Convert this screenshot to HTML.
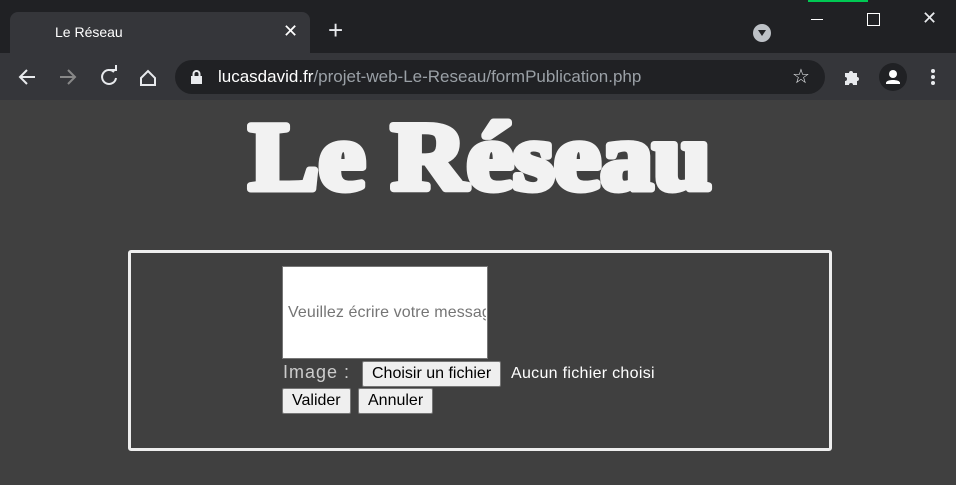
<!DOCTYPE html>
<html><head><meta charset="utf-8"><style>
*{margin:0;padding:0;box-sizing:border-box}
body{width:956px;height:485px;background:#404040;font-family:"Liberation Sans",Arial,sans-serif;position:relative;overflow:hidden}
.top{position:absolute;left:0;top:0;width:956px;height:53px;background:#202124}
.tab{position:absolute;left:10px;top:12px;width:300px;height:41px;background:#35363a;border-radius:8px 8px 0 0}
.tab span{position:absolute;left:45px;top:12px;color:#fff;font-size:14px}
.tab .x{left:273px;top:9px;font-size:18px}
.bar{position:absolute;left:0;top:53px;width:956px;height:47px;background:#35363a}
.url{position:absolute;left:175px;top:60px;width:650px;height:34px;border-radius:17px;background:#202124}
.url .t{position:absolute;left:43px;top:7px;font-size:17px;color:#9aa0a6}
.url .t b{font-weight:normal;color:#fff}
.ic{position:absolute;color:#e8eaed}
.box{position:absolute;left:128px;top:250px;width:704px;height:201px;border:3px solid #eee;border-radius:3px}
.ta{position:absolute;left:282px;top:266px;width:206px;height:93px;background:#fff;border:1px solid #767676}
.ta span{position:absolute;left:5px;top:37px;font-size:16px;color:#757575;white-space:nowrap;overflow:hidden;width:198px;letter-spacing:0.1px}
.btn{position:absolute;background:#efefef;border:1px solid #767676;border-radius:2px;font-size:16px;color:#000;height:26px;line-height:24px;padding:0 9px}
</style></head><body>
<div class="top"></div>
<div style="position:absolute;left:808px;top:0;width:60px;height:2px;background:#00c853"></div>
<div class="tab"><span>Le Réseau</span><span class="x">✕</span></div>
<div class="ic" style="left:328px;top:17px;font-size:26px;line-height:26px;font-weight:300">+</div>
<div style="position:absolute;left:753px;top:24px;width:18px;height:18px;border-radius:50%;background:#bdc1c6"><div style="position:absolute;left:5px;top:6px;border-left:4px solid transparent;border-right:4px solid transparent;border-top:6px solid #202124"></div></div>
<div style="position:absolute;left:811px;top:19px;width:12px;height:1px;background:#fff"></div>
<div style="position:absolute;left:867px;top:13px;width:13px;height:13px;border:1px solid #fff"></div>
<div class="ic" style="left:922px;top:8px;font-size:18px">✕</div>
<div class="bar"></div>
<svg style="position:absolute;left:0;top:60px" width="175" height="34" viewBox="0 0 175 34" fill="none" stroke-width="2">
<path d="M35 17H20M27 10l-7 7 7 7" stroke="#e8eaed"/>
<path d="M60 17h15M68 10l7 7-7 7" stroke="#888"/>
<path d="M114 12a7 7 0 1 0 2 6" stroke="#e8eaed"/><path d="M110 10h6v-5" stroke="#e8eaed"/>
<path d="M141 18l7-7 7 7v7h-14z" stroke="#e8eaed"/>
</svg>
<div class="url"><svg style="position:absolute;left:15px;top:9px" width="14" height="16"><rect x="1" y="7" width="11" height="8" fill="#e8eaed"/><path d="M3.5 7V5a3 3 0 0 1 6 0v2" stroke="#e8eaed" stroke-width="2" fill="none"/></svg>
<div class="t"><b>lucasdavid.fr</b>/projet-web-Le-Reseau/formPublication.php</div>
<div class="ic" style="left:617px;top:4px;font-size:20px">☆</div></div>
<svg style="position:absolute;left:842px;top:67px" width="20" height="20"><path d="M3 6h4a2 2 0 0 1 4 0h4v4a2 2 0 0 1 0 4v4H11a2 2 0 0 0-4 0H3v-4a2 2 0 0 0 0-4z" fill="#e8eaed"/></svg>
<div style="position:absolute;left:879px;top:63px;width:28px;height:28px;border-radius:50%;background:#202124"><svg width="28" height="28"><circle cx="14" cy="11" r="4" fill="#fff"/><path d="M7 20c0-4 14-4 14 0v1H7z" fill="#fff"/></svg></div>
<div style="position:absolute;left:931px;top:69px;width:4px;height:4px;border-radius:2px;background:#e8eaed;box-shadow:0 6px #e8eaed,0 12px #e8eaed"></div>
<svg style="position:absolute;left:0;top:100px" width="956" height="110"><text x="249" y="89" textLength="462" lengthAdjust="spacingAndGlyphs" font-family="Liberation Serif,serif" font-weight="bold" font-size="96" fill="#f2f2f2" stroke="#f2f2f2" stroke-width="7" stroke-linejoin="round">Le Réseau</text></svg>
<div class="box"></div>
<div class="ta"><span>Veuillez écrire votre message</span></div>
<div style="position:absolute;left:283px;top:362px;font-size:18px;color:#ccc;letter-spacing:1px;font-weight:300">Image :</div>
<div class="btn" style="left:362px;top:361px">Choisir un fichier</div>
<div style="position:absolute;left:511px;top:365px;font-size:16px;color:#fff;letter-spacing:0.3px">Aucun fichier choisi</div>
<div class="btn" style="left:282px;top:388px">Valider</div>
<div class="btn" style="left:358px;top:388px">Annuler</div>
</body></html>
